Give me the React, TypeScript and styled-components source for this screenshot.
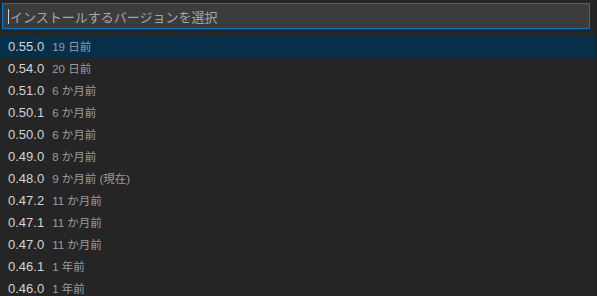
import React from "react";
import styled, { createGlobalStyle } from "styled-components";

const Global = createGlobalStyle`
  html, body { margin: 0; padding: 0; background: #252526; }
  body { width: 597px; height: 296px; overflow: hidden; }
  * { box-sizing: border-box; }
`;

const Panel = styled.div`
  width: 597px;
  height: 296px;
  background: #252526;
  border-right: 1px solid #1e1e1e;
  font-family: "Liberation Sans", "Noto Sans CJK JP", sans-serif;
  display: flex;
  flex-direction: column;
  overflow: hidden;
`;

const InputWrap = styled.div`
  padding: 3px 6px 6px 2px;
`;

const InputBox = styled.div`
  height: 26px;
  background: #3c3c3c;
  border: 1px solid #007acc;
  display: flex;
  align-items: center;
  padding-left: 5px;
`;

const Caret = styled.span`
  width: 1px;
  height: 15px;
  background: #cccccc;
  margin-right: 1px;
`;

const Placeholder = styled.span`
  color: #a6a6a6;
  font-size: 13px;
  font-family: "Noto Sans CJK JP", "Liberation Sans", sans-serif;
`;

const List = styled.div`
  display: flex;
  flex-direction: column;
`;

const Row = styled.div<{ $selected?: boolean }>`
  height: 22px;
  display: flex;
  align-items: center;
  padding-left: 8px;
  margin-right: 1px;
  background: ${(p) => (p.$selected ? "#062f4a" : "transparent")};
`;

const Label = styled.span`
  color: #d4d4d4;
  font-size: 13px;
`;

const Desc = styled.span`
  color: #cccccc;
  opacity: 0.7;
  font-size: 11.5px;
  margin-left: 8px;
  font-family: "Liberation Sans", "Noto Sans CJK JP", sans-serif;
`;

const items: [string, string][] = [
  ["0.55.0", "19 日前"],
  ["0.54.0", "20 日前"],
  ["0.51.0", "6 か月前"],
  ["0.50.1", "6 か月前"],
  ["0.50.0", "6 か月前"],
  ["0.49.0", "8 か月前"],
  ["0.48.0", "9 か月前 (現在)"],
  ["0.47.2", "11 か月前"],
  ["0.47.1", "11 か月前"],
  ["0.47.0", "11 か月前"],
  ["0.46.1", "1 年前"],
  ["0.46.0", "1 年前"],
];

export default function App() {
  return (
    <Panel>
      <Global />
      <InputWrap>
        <InputBox>
          <Caret />
          <Placeholder>インストールするバージョンを選択</Placeholder>
        </InputBox>
      </InputWrap>
      <List>
        {items.map(([v, d], i) => (
          <Row key={v} $selected={i === 0}>
            <Label>{v}</Label>
            <Desc>{d}</Desc>
          </Row>
        ))}
      </List>
    </Panel>
  );
}
